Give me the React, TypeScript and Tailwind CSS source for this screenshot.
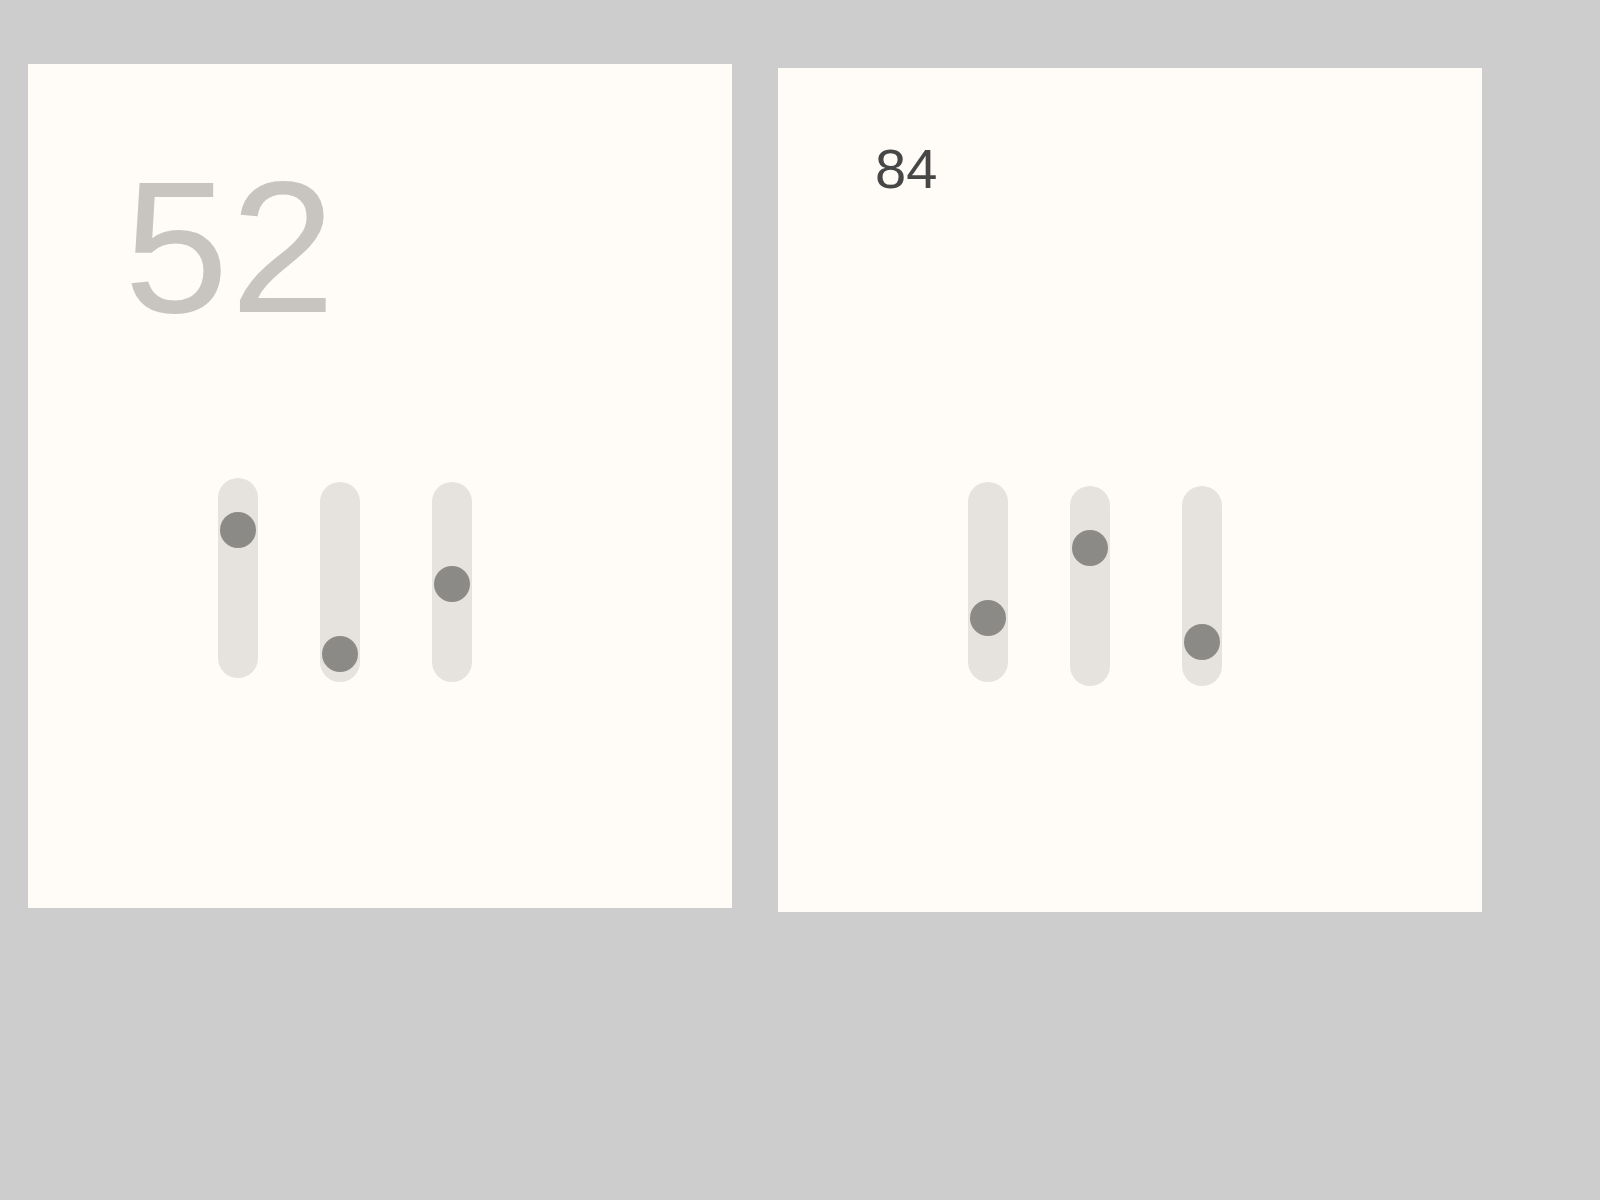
const fontStack = { fontFamily: '"Liberation Sans", Arial, sans-serif' }

interface SliderProps {
  thumbTop: number
  offsetTop: string
}

function VerticalSlider({ thumbTop, offsetTop }: SliderProps) {
  return (
    <div className={`relative h-[200px] w-[40px] shrink-0 rounded-full bg-[#e6e3de] ${offsetTop}`}>
      <div
        className="absolute left-[2px] h-[36px] w-[36px] rounded-full bg-[#8b8a86]"
        style={{ top: thumbTop }}
      />
    </div>
  )
}

function SliderRow({ thumbs }: { thumbs: [number, number, number] }) {
  return (
    <div className="flex items-start pl-[190px]">
      <VerticalSlider thumbTop={thumbs[0]} offsetTop="mt-0" />
      <div className="w-[62px] shrink-0" />
      <VerticalSlider thumbTop={thumbs[1]} offsetTop="mt-[4px]" />
      <div className="w-[72px] shrink-0" />
      <VerticalSlider thumbTop={thumbs[2]} offsetTop="mt-[4px]" />
    </div>
  )
}

export default function App() {
  return (
    <div className="min-h-[1200px] w-full bg-[#cdcdcd]" style={fontStack}>
      <div className="flex items-start gap-[46px] pl-[28px] pt-[64px]">
        <section className="flex h-[844px] w-[704px] shrink-0 flex-col bg-[#fffbf7]">
          <div className="pl-[96px] pt-[89px]">
            <p className="text-[188px] leading-none tracking-[2px] text-[#c8c5c0]">52</p>
          </div>
          <div className="mt-[137px]">
            <SliderRow thumbs={[34, 154, 84]} />
          </div>
        </section>

        <section className="mt-[4px] flex h-[844px] w-[704px] shrink-0 flex-col bg-[#fffbf7]">
          <div className="pl-[97px] pt-[73px]">
            <p className="text-[56px] leading-none text-[#474747]">84</p>
          </div>
          <div className="mt-[285px]">
            <SliderRow thumbs={[118, 44, 138]} />
          </div>
        </section>
      </div>
    </div>
  )
}
